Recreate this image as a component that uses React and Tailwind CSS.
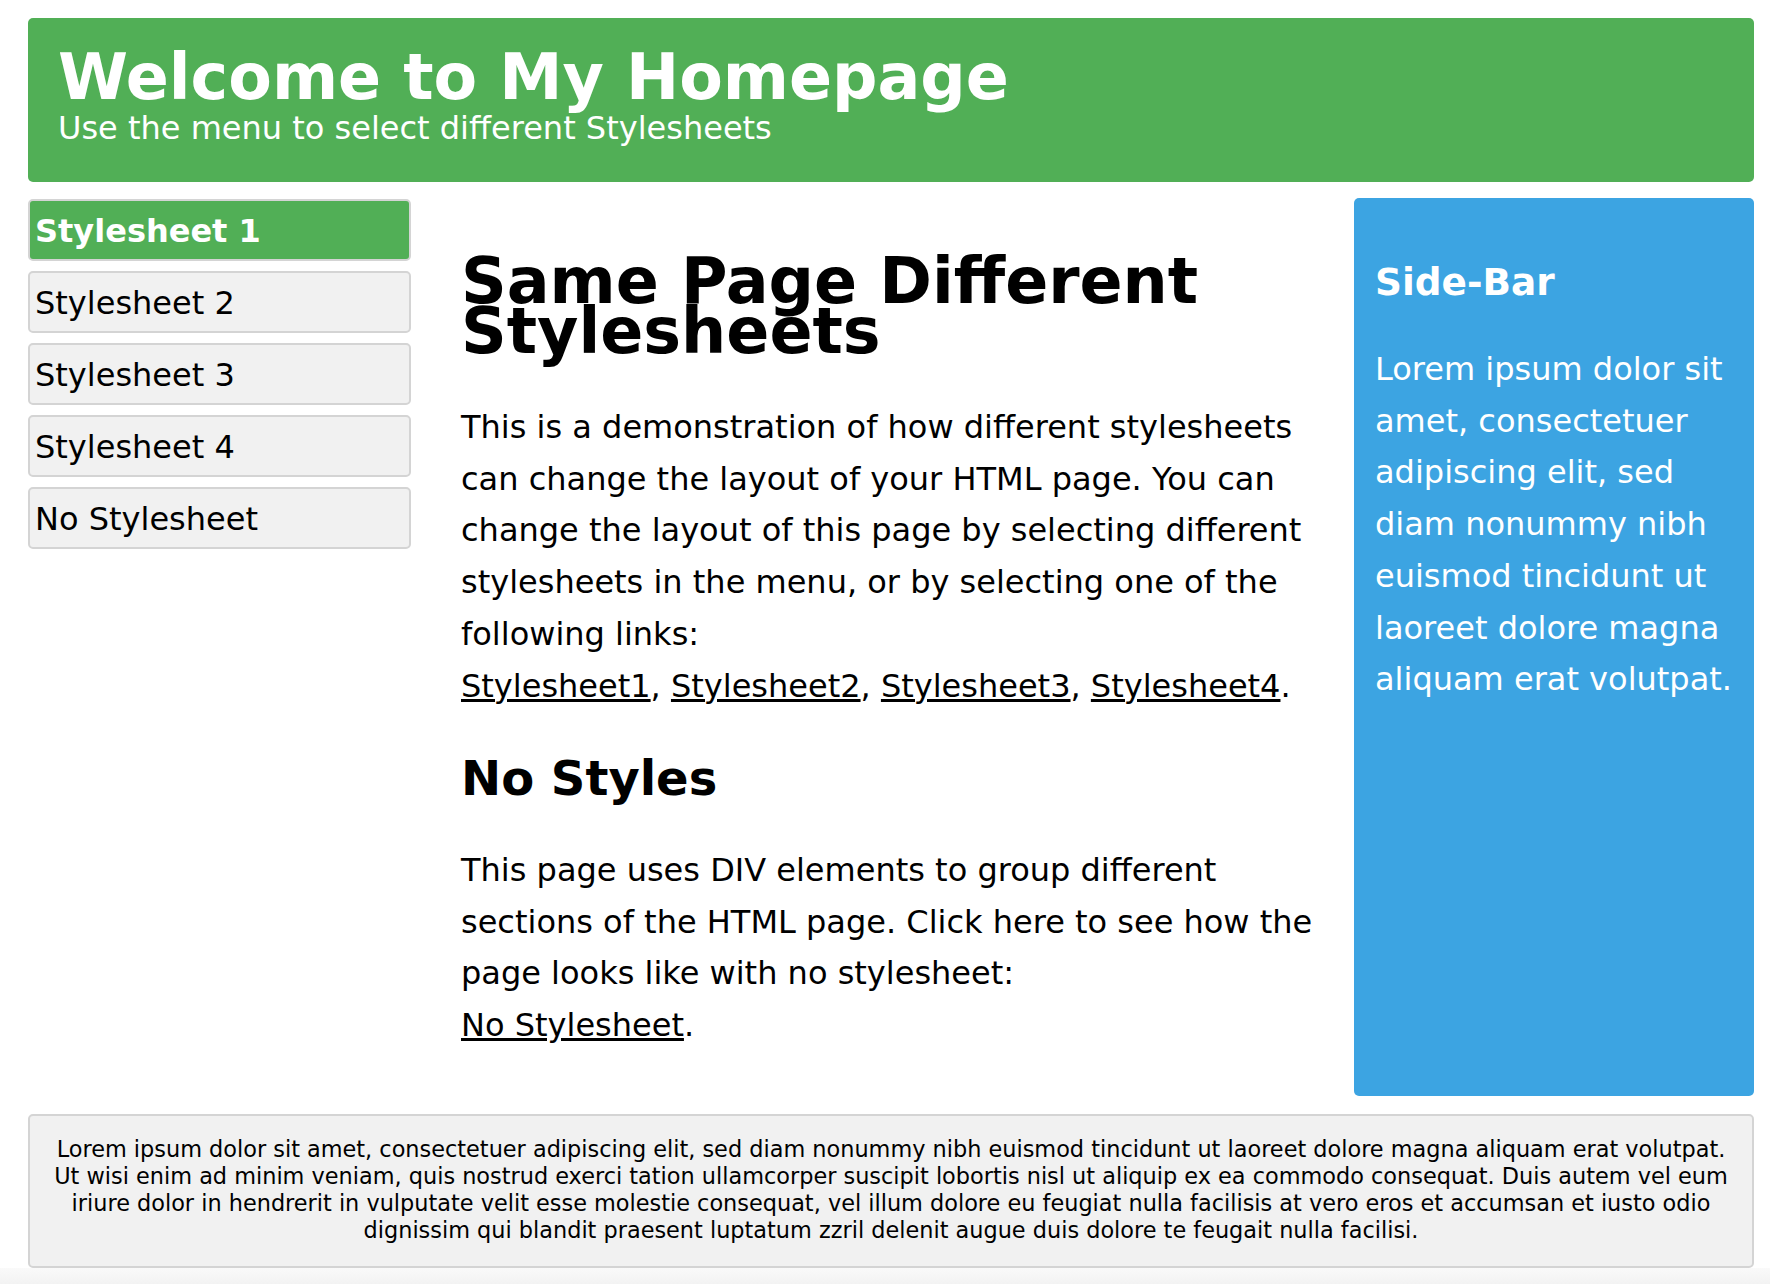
import React from "react";

const menu = ["Stylesheet 1", "Stylesheet 2", "Stylesheet 3", "Stylesheet 4", "No Stylesheet"];

export default function App() {
  return (
    <div className="min-h-screen bg-white font-['DejaVu_Sans','Verdana',sans-serif] text-black pl-[28px] pr-[16px] pt-[18px]">
      <header className="h-[164px] rounded-[5px] bg-[#51af56] text-white pl-[30px] pt-[27px]">
        <h1 className="text-[63.5px] font-bold leading-[64px]">Welcome to My Homepage</h1>
        <p className="text-[32px] leading-[38px]">Use the menu to select different Stylesheets</p>
      </header>

      <div className="mt-[16px] flex items-stretch">
        <nav className="w-[383px] shrink-0 pt-[1px] flex flex-col gap-[10px]">
          {menu.map((m, i) => (
            <a
              key={m}
              href="#"
              className={
                i === 0
                  ? "block h-[62px] rounded-[5px] border-2 border-[#d4d4d4] bg-[#51af56] text-white font-bold pl-[5px] pt-[11px] text-[32px] leading-[38px]"
                  : "block h-[62px] rounded-[5px] border-2 border-[#d4d4d4] bg-[#f1f1f1] text-black pl-[5px] pt-[11px] text-[32px] leading-[38px]"
              }
            >
              {m}
            </a>
          ))}
        </nav>

        <main className="flex-1 min-w-0 pl-[50px] pr-[13px] pt-[58px] pb-[44px]">
          <h1 className="text-[63.5px] font-bold leading-[50px]">Same Page Different Stylesheets</h1>
          <p className="mt-[46px] text-[32px] leading-[51.7px]">
            This is a demonstration of how different stylesheets can change the layout of your HTML page. You can change the layout of this page by selecting different stylesheets in the menu, or by selecting one of the following links:
            <br />
            <a href="#" className="underline">Stylesheet1</a>, <a href="#" className="underline">Stylesheet2</a>, <a href="#" className="underline">Stylesheet3</a>, <a href="#" className="underline">Stylesheet4</a>.
          </p>
          <h2 className="mt-[38px] text-[48px] font-bold leading-[57.6px]">No Styles</h2>
          <p className="mt-[37px] text-[32px] leading-[51.7px]">
            This page uses DIV elements to group different sections of the HTML page. Click here to see how the page looks like with no stylesheet:
            <br />
            <a href="#" className="underline">No Stylesheet</a>.
          </p>
        </main>

        <aside className="w-[400px] shrink-0 rounded-[5px] bg-[#3ca4e2] text-white pl-[21px] pr-[14px] pt-[62px]">
          <h3 className="text-[37.44px] font-bold leading-[45px]">Side-Bar</h3>
          <p className="mt-[39px] text-[32px] leading-[51.7px]">
            Lorem ipsum dolor sit amet, consectetuer adipiscing elit, sed diam nonummy nibh euismod tincidunt ut laoreet dolore magna aliquam erat volutpat.
          </p>
        </aside>
      </div>

      <footer className="mt-[18px] h-[154px] rounded-[5px] border-2 border-[#d4d4d4] bg-[#f1f1f1] px-[8px] pt-[20px] text-center text-[22.4px] leading-[27.2px]">
        Lorem ipsum dolor sit amet, consectetuer adipiscing elit, sed diam nonummy nibh euismod tincidunt ut laoreet dolore magna aliquam erat volutpat.
        <br />
        Ut wisi enim ad minim veniam, quis nostrud exerci tation ullamcorper suscipit lobortis nisl ut aliquip ex ea commodo consequat. Duis autem vel eum
        <br />
        iriure dolor in hendrerit in vulputate velit esse molestie consequat, vel illum dolore eu feugiat nulla facilisis at vero eros et accumsan et iusto odio
        <br />
        dignissim qui blandit praesent luptatum zzril delenit augue duis dolore te feugait nulla facilisi.
      </footer>
      <div className="-ml-[28px] -mr-[16px] h-[17px] bg-gradient-to-b from-[#fafafa] to-[#f2f2f2]" />
    </div>
  );
}
